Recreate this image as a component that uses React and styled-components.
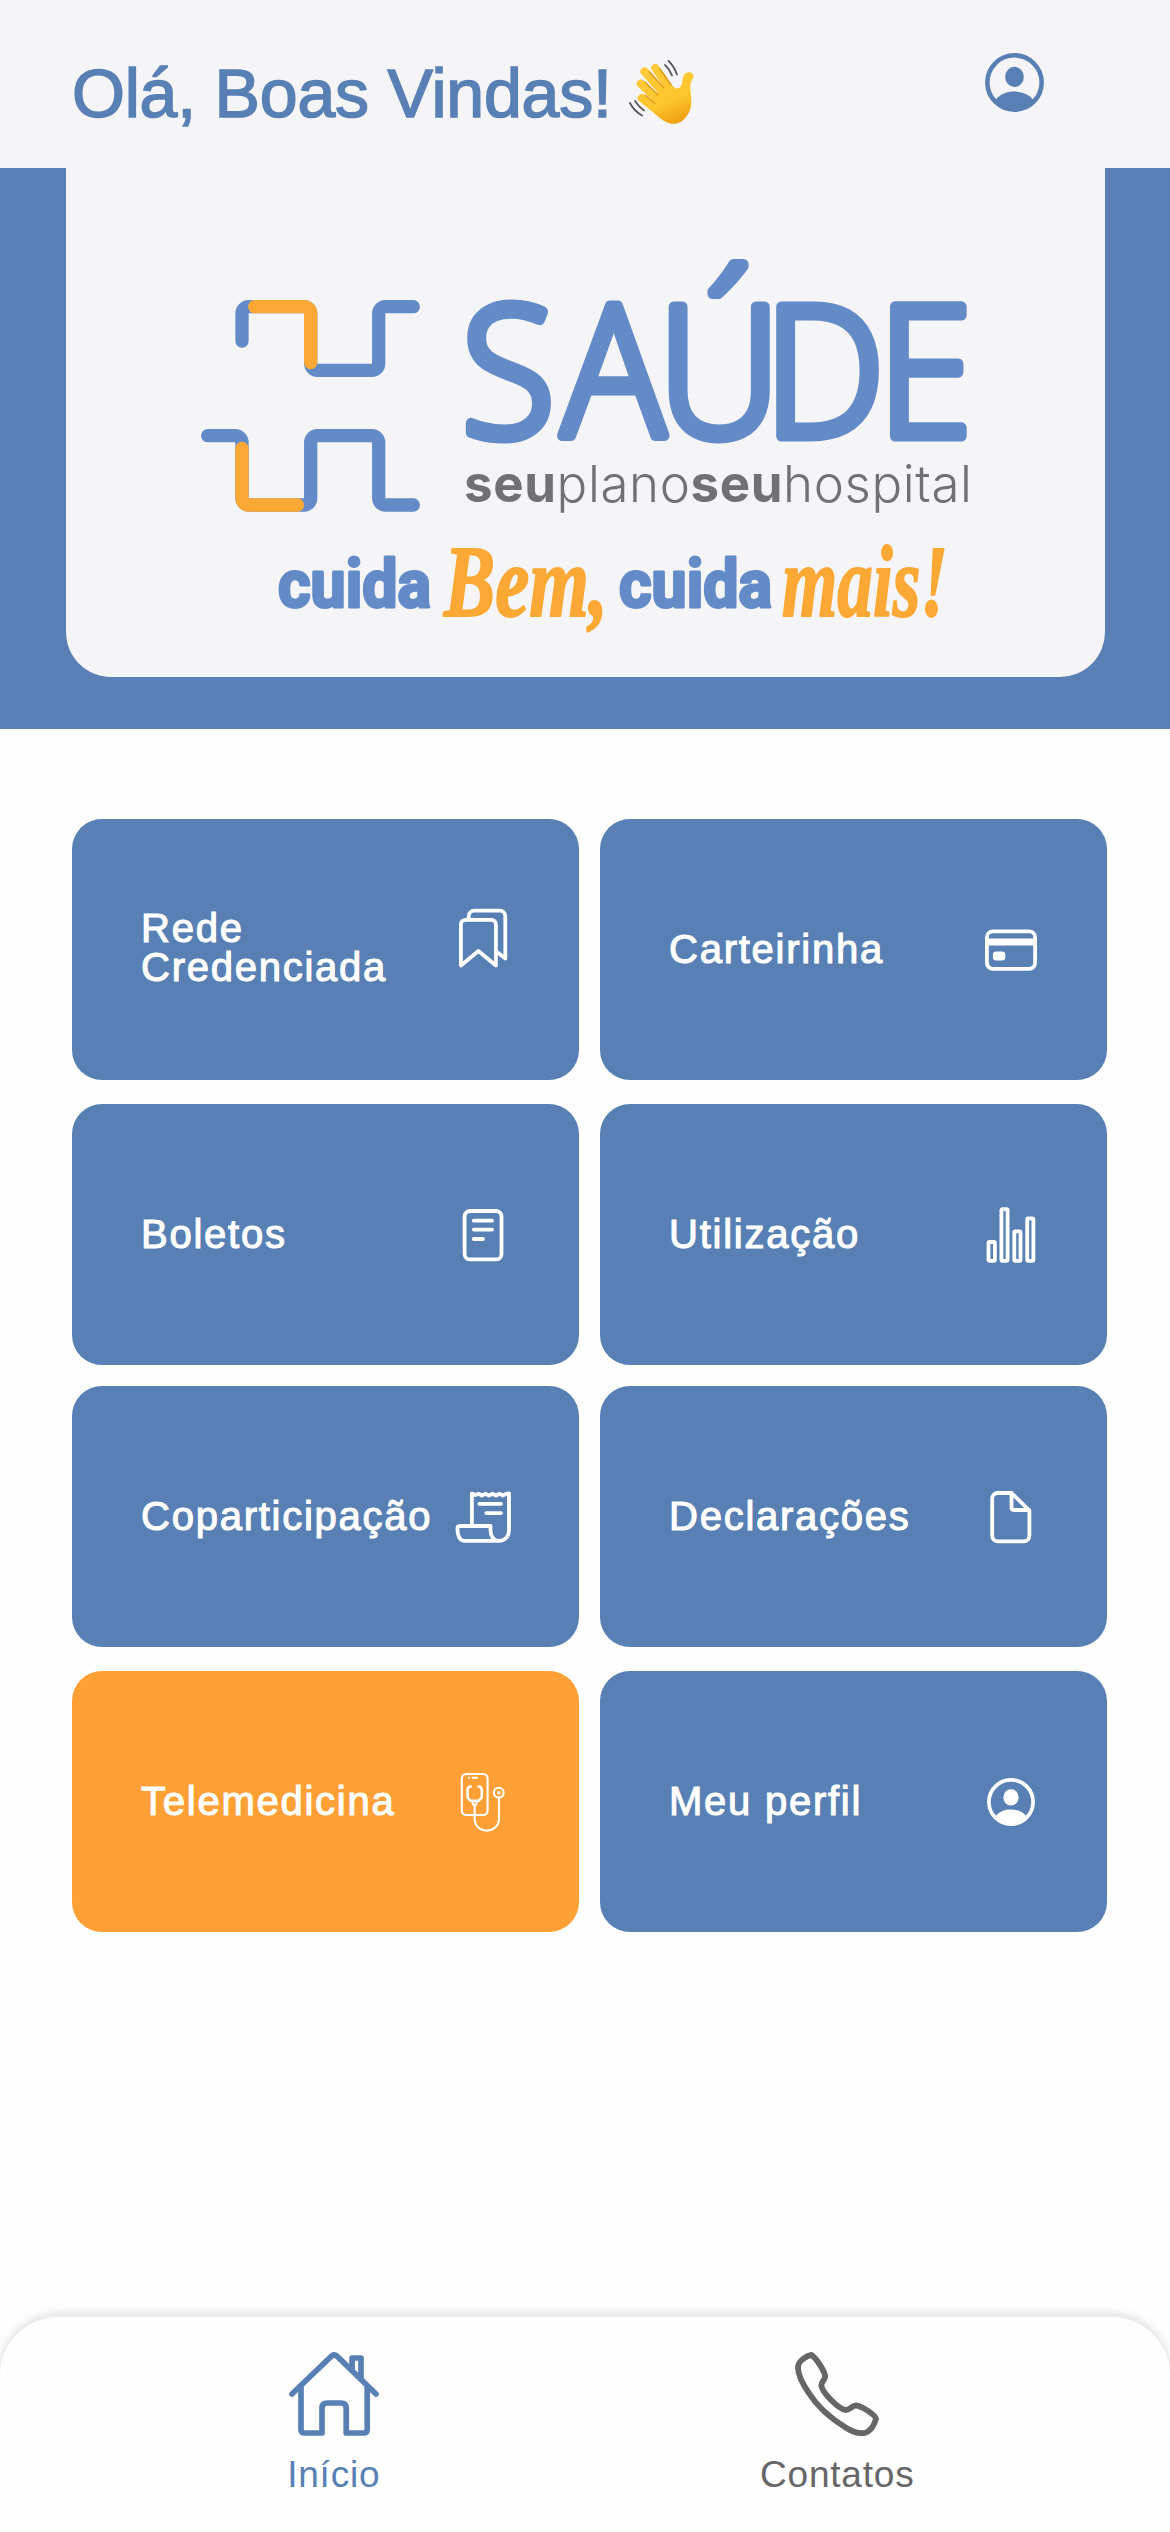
import React from 'react';
import styled, { createGlobalStyle } from 'styled-components';

const blue = '#5880b5';
const logoBlue = '#638bc8';
const orange = '#ffa037';
const logoOrange = '#fba834';

const GlobalStyle = createGlobalStyle`
  * {
    box-sizing: border-box;
  }

  body {
    margin: 0;
    background-color: #fefefe;
    font-family: 'Liberation Sans', Arial, sans-serif;
  }
`;

const Page = styled.div`
  display: flex;
  flex-direction: column;
  width: 1170px;
  height: 2532px;
  overflow: hidden;
`;

const Header = styled.header`
  display: flex;
  justify-content: space-between;
  height: 168px;
  padding: 53px 126px 0 72px;
  background-color: #f5f4f7;
`;

const Greeting = styled.div`
  display: flex;
  align-items: flex-start;
  gap: 17px;
`;

const Title = styled.h1`
  margin: 0;
  font-size: 68px;
  line-height: 80px;
  font-weight: normal;
  letter-spacing: -0.2px;
  color: ${blue};
  white-space: nowrap;
  -webkit-text-stroke: 1.6px ${blue};
`;

const Wave = styled.svg`
  width: 66px;
  height: 65px;
  margin-top: 7px;
`;

const Avatar = styled.div`
  width: 59px;
  height: 59px;
  color: ${blue};
`;

const Banner = styled.section`
  height: 561px;
  padding: 0 65px 52px 66px;
  background-color: ${blue};
`;

const BannerCard = styled.div`
  height: 509px;
  padding: 112px 0 0 124px;
  border-radius: 0 0 45px 45px;
  background-color: #f5f4f7;
`;

const Logo = styled.svg`
  display: block;
  width: 790px;
  height: 380px;
  overflow: visible;
`;

const Menu = styled.main`
  display: flex;
  flex-direction: column;
  gap: 21px;
  padding: 90px 63px 0 72px;
`;

const Group = styled.div`
  display: grid;
  grid-template-columns: 507px 507px;
  grid-auto-rows: 261px;
  gap: 24px 21px;
`;

const Card = styled.div`
  display: flex;
  justify-content: space-between;
  align-items: center;
  padding: 0 66px 0 69px;
  border-radius: 30px;
  background-color: ${(props) => (props.$highlight ? orange : blue)};
`;

const Label = styled.p`
  margin: 0;
  width: 300px;
  padding-bottom: ${(props) => (props.$raised ? '3px' : '0')};
  font-size: 40px;
  line-height: 39px;
  letter-spacing: 1.75px;
  color: #fff;
  -webkit-text-stroke: 1.1px #fff;
`;

const CardIcon = styled.div`
  width: 60px;
  height: 60px;
  margin-left: 11px;
  margin-bottom: ${(props) => (props.$raised ? '24px' : '0')};
  color: #fff;
`;

const SmallIcon = styled.div`
  padding: 6px;
`;

const Svg = styled.svg`
  display: block;
  width: 100%;
  height: 100%;
  fill: none;
  stroke: currentColor;
  stroke-width: 3.8;
  stroke-linecap: round;
  stroke-linejoin: round;
`;

const TabBar = styled.nav`
  display: flex;
  height: 218px;
  margin-top: auto;
  padding: 35px 81px 0 82px;
  border-top: 3px solid #ececef;
  border-radius: 60px 60px 0 0;
  background-color: #fefefe;
  box-shadow: 0 0 9px rgba(60, 60, 80, 0.2);
`;

const Tab = styled.div`
  flex: 1;
  display: flex;
  flex-direction: column;
  align-items: center;
  gap: 18px;
  color: ${(props) => (props.$active ? blue : '#666568')};
`;

const TabIcon = styled.div`
  width: ${(props) => props.$width}px;
  height: 84px;
`;

const TabLabel = styled.span`
  font-size: 37px;
  line-height: 42px;
  letter-spacing: 0.8px;
`;

const ProfileIcon = () => (
  <Svg viewBox="0 0 48 48">
    <circle cx="24" cy="24" r="22.1" strokeWidth="3.7" />
    <g fill="currentColor" stroke="none">
      <ellipse cx="24" cy="19.4" rx="7.6" ry="8.2" />
      <path d="M8.8 38C12.5 33.3 18 31.4 24 31.4S35.5 33.3 39.2 38C35 43.5 30 46.5 24 46.5S13 43.5 8.8 38Z" />
    </g>
  </Svg>
);

const BookmarksIcon = () => (
  <Svg viewBox="0 0 60 60">
    <path d="M7.9 57.5V16.5a4.7 4.7 0 0 1 4.7-4.7H38.2a4.7 4.7 0 0 1 4.7 4.7V57.5L25.4 43Z" />
    <path d="M15.7 10.5V8.3a5.6 5.6 0 0 1 5.6-5.6H46.7a5.6 5.6 0 0 1 5.6 5.6V50.5L44 44" />
  </Svg>
);

const CreditCardIcon = () => (
  <Svg viewBox="0 0 60 60">
    <rect x="5.9" y="11.4" width="48.2" height="37.4" rx="6" />
    <path d="M6 22H54" strokeWidth="7" strokeLinecap="butt" />
    <rect x="11.8" y="31.4" width="12.6" height="9.2" rx="3.5" fill="currentColor" stroke="none" />
  </Svg>
);

const BillIcon = () => (
  <Svg viewBox="0 0 60 60">
    <rect x="11.6" y="6" width="36.9" height="48.4" rx="5.5" />
    <path d="M20.8 15.7H39M20.8 24.6H39M20.8 34H30" />
  </Svg>
);

const ChartIcon = () => (
  <Svg viewBox="0 0 60 60">
    <rect x="7.5" y="37" width="6.4" height="18.8" rx="1" />
    <rect x="20.4" y="4.2" width="6.2" height="51.6" rx="1" />
    <rect x="33.3" y="26.4" width="6.2" height="29.4" rx="1" />
    <rect x="46.2" y="13.4" width="6.2" height="42.4" rx="1" />
  </Svg>
);

const ReceiptIcon = () => (
  <Svg viewBox="0 0 60 60">
    <path d="M18.9 39V6.5L22.5 8 25.5 6.8 29 8.5 32.5 6.8 36 8.5 39.5 6.8 43 8.5 46.5 6.8 50 8.5 53 6.8 56 6.5V43.5C56 49.8 51.5 53.8 46 53.8H11C7 53.8 4.4 49 4.4 41.5Q4.4 39 7 39H37.5V43.5C37.5 49.5 41 53.8 46 53.8" />
    <path d="M26.4 16.8H48M33.3 26.1H48" />
  </Svg>
);

const DocumentIcon = () => (
  <Svg viewBox="0 0 60 60">
    <path d="M30.5 6H16.8a5.6 5.6 0 0 0-5.6 5.6V48.7a5.6 5.6 0 0 0 5.6 5.6H42.8a5.6 5.6 0 0 0 5.6-5.6V23.5Z" />
    <path d="M30.5 6V20.8a2.2 2.2 0 0 0 2.2 2.2H48.2" />
  </Svg>
);

const TelemedicineIcon = () => (
  <Svg viewBox="0 0 60 60">
    <g strokeWidth="2.1">
      <rect x="8.8" y="2" width="25.8" height="41" rx="4.5" />
      <path d="M19.5 5.8H24M15.8 5.8H16" />
      <path d="M17.8 14.6Q14.6 14.6 14.6 18V25.5L17.5 28.8H25.7L28.7 25.5V18Q28.7 14.6 25.5 14.6" strokeWidth="2.5" />
      <circle cx="21.6" cy="31" r="2" />
      <path d="M21.6 33.5V46.5C21.6 54 27 58.6 33.8 58.6S46 54 46 46.5V26.5" />
      <circle cx="45.8" cy="20.7" r="4.9" />
      <circle cx="45.8" cy="20.7" r="1.8" fill="currentColor" stroke="none" />
    </g>
  </Svg>
);

const HomeIcon = () => (
  <Svg viewBox="0 0 90 84">
    <g strokeWidth="5.7">
      <path d="M3 42L42.3 4.2Q45.2 1.6 48 4.2L87 42" />
      <path d="M12 35V77.5Q12 81 15.5 81H33V56Q33 51 38 51H52.2Q57.2 51 57.2 56V81H74.7Q78.2 81 78.2 77.5V35" />
      <path d="M63.1 17V6H72V27" />
    </g>
  </Svg>
);

const PhoneIcon = () => (
  <Svg viewBox="0 0 84 84">
    <path
      strokeWidth="5.8"
      d="M16.4 2.9C12 3.7 3 8.7 3 15.5C3 22 7 31 13.8 41C22 54 35 66 51 75.7C57 79.5 62 81.2 67 81.2C74 81.2 78.5 75 81 67C80.5 63.2 68 54.5 61 53.3C57 53.5 55 58 50.4 58C43 56.5 27.5 41 26.3 33.5C26 30 30.5 28 30.2 24C29 18.5 22 7 16.4 2.9Z"
    />
  </Svg>
);

const WavingHand = () => (
  <Wave viewBox="0 0 66 65">
    <defs>
      <linearGradient id="skin" gradientUnits="userSpaceOnUse" x1="20" y1="5" x2="45" y2="64">
        <stop offset="0" stopColor="#ffc93a" />
        <stop offset="0.65" stopColor="#fdc62c" />
        <stop offset="1" stopColor="#f0a012" />
      </linearGradient>
    </defs>
    <g stroke="url(#skin)" strokeWidth="8.2" strokeLinecap="round">
      <path d="M26.3 8L43 32" />
      <path d="M15.6 11.5L37 36" />
      <path d="M11.8 23.5L33 44" />
      <path d="M12.8 38L33 54" />
    </g>
    <path
      fill="url(#skin)"
      d="M27 34L41 24C45 29 50 30 52 26C54 21 53 15 57 13C61 11 65.5 14 64.5 17.5C61 22 61 26 61.5 31C63 41 63 50 57 57C52 64 44 65.5 37 62C31 59 24 52 19 47Z"
    />
    <g stroke="#e09a1a" strokeWidth="1.4" strokeLinecap="round" fill="none">
      <path d="M20 11.5L35 28M31 9L42 25M16 22L29 35M16.5 35.5L26 43.5" />
    </g>
    <g stroke="#58595b" strokeWidth="1.8" strokeLinecap="round" fill="none">
      <path d="M39.5 1Q45 6 48 14.5M36 5Q40.5 9 43 15.5M1 43Q5 51 13 55.5M6 41Q10 47 15 50.5" />
    </g>
  </Wave>
);

const BrandLogo = () => (
  <Logo viewBox="0 0 790 380">
    <g fill="none" strokeWidth="13.3" strokeLinecap="round">
      <g stroke={logoBlue}>
        <path d="M52 61V33.4a6.7 6.7 0 0 1 6.7-6.7H114a6.7 6.7 0 0 1 6.7 6.7V83.6a6.7 6.7 0 0 0 6.7 6.7H182a6.7 6.7 0 0 0 6.7-6.7V33.4a6.7 6.7 0 0 1 6.7-6.7H223.3" />
        <path d="M17.7 155.7H45.3a6.7 6.7 0 0 1 6.7 6.7V218.3a6.7 6.7 0 0 0 6.7 6.7H114a6.7 6.7 0 0 0 6.7-6.7V162.4a6.7 6.7 0 0 1 6.7-6.7H182a6.7 6.7 0 0 1 6.7 6.7V218.3a6.7 6.7 0 0 0 6.7 6.7H223.3" />
      </g>
      <g stroke={logoOrange}>
        <path d="M64.7 26.7H114a6.7 6.7 0 0 1 6.7 6.7V82.5" />
        <path d="M52 168.5V218.3a6.7 6.7 0 0 0 6.7 6.7H107.5" />
      </g>
    </g>
    <text
      transform="scale(0.94 1)"
      x="289 396 498 611 732"
      y="155.500"
      fontFamily="'Open Sans', sans-serif"
      fontWeight="300"
      fontSize="181"
      fill={logoBlue}
      stroke={logoBlue}
      strokeWidth="11"
      strokeLinejoin="round"
    >
      SAÚDE
    </text>
    <text x="274" y="221.5" textLength="508" fontFamily="Inter, sans-serif" fontSize="51" fontWeight="300" fill="#717074">
      <tspan fontWeight="700">seu</tspan>plano<tspan fontWeight="700">seu</tspan>hospital
    </text>
    <g fontFamily="Roboto, sans-serif" fontWeight="700" fontSize="66" fill={logoBlue} stroke={logoBlue} strokeWidth="3" strokeLinejoin="round">
      <text x="88" y="327" textLength="153" lengthAdjust="spacingAndGlyphs">cuida</text>
      <text x="429" y="327" textLength="153" lengthAdjust="spacingAndGlyphs">cuida</text>
    </g>
    <g fontFamily="'Liberation Serif', serif" fontStyle="italic" fontWeight="700" fontSize="102" fill={logoOrange} stroke={logoOrange} strokeWidth="2" strokeLinejoin="round">
      <text x="254" y="336" textLength="164" lengthAdjust="spacingAndGlyphs">Bem,</text>
      <text x="592" y="336" textLength="166" lengthAdjust="spacingAndGlyphs">mais!</text>
    </g>
  </Logo>
);

const groups = [
  [
    { label: 'Rede Credenciada', icon: BookmarksIcon, raised: true },
    { label: 'Carteirinha', icon: CreditCardIcon },
    { label: 'Boletos', icon: BillIcon },
    { label: 'Utilização', icon: ChartIcon },
  ],
  [
    { label: 'Coparticipação', icon: ReceiptIcon },
    { label: 'Declarações', icon: DocumentIcon },
    { label: 'Telemedicina', icon: TelemedicineIcon, highlight: true },
    { label: 'Meu perfil', icon: ProfileIcon, small: true },
  ],
];

const App = () => {
  return (
    <Page>
      <GlobalStyle />
      <Header>
        <Greeting>
          <Title>Olá, Boas Vindas!</Title>
          <WavingHand />
        </Greeting>
        <Avatar>
          <ProfileIcon />
        </Avatar>
      </Header>
      <Banner>
        <BannerCard>
          <BrandLogo />
        </BannerCard>
      </Banner>
      <Menu>
        {groups.map((items, index) => (
          <Group key={index}>
            {items.map(({ label, icon: Icon, raised, highlight, small }) => (
              <Card key={label} $highlight={highlight}>
                <Label $raised={raised}>{label}</Label>
                <CardIcon $raised={raised}>
                  {small ? (
                    <SmallIcon>
                      <Icon />
                    </SmallIcon>
                  ) : (
                    <Icon />
                  )}
                </CardIcon>
              </Card>
            ))}
          </Group>
        ))}
      </Menu>
      <TabBar>
        <Tab $active>
          <TabIcon $width={90}>
            <HomeIcon />
          </TabIcon>
          <TabLabel>Início</TabLabel>
        </Tab>
        <Tab>
          <TabIcon $width={84}>
            <PhoneIcon />
          </TabIcon>
          <TabLabel>Contatos</TabLabel>
        </Tab>
      </TabBar>
    </Page>
  );
};

export default App;
